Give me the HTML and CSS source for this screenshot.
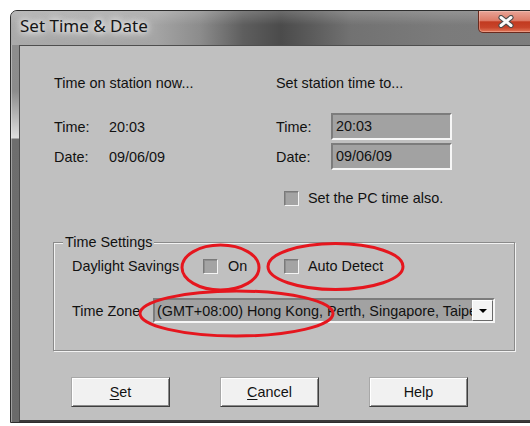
FILE: index.html
```html
<!DOCTYPE html>
<html lang="en">
<head>
<meta charset="utf-8">
<title>Set Time &amp; Date</title>
<link rel="stylesheet" href="styles.css">
</head>
<body>
<div class="window">
  <div class="titlebar">
    <span class="title">Set Time &amp; Date</span>
    <div class="close">
      <svg width="18" height="13" viewBox="0 0 18 13">
        <path d="M4 2.5 L14 10.5 M14 2.5 L4 10.5" stroke="#4a4a4a" stroke-width="5.2" stroke-linecap="round"/>
        <path d="M4 2.5 L14 10.5 M14 2.5 L4 10.5" stroke="#fbfbfb" stroke-width="3" stroke-linecap="round"/>
      </svg>
    </div>
  </div>
  <div class="client">
    <div class="columns">
      <div class="col col-left">
        <p class="heading">Time on station now...</p>
        <div class="row"><span class="label">Time:</span><span class="value">20:03</span></div>
        <div class="row"><span class="label">Date:</span><span class="value">09/06/09</span></div>
      </div>
      <div class="col col-right">
        <p class="heading">Set station time to...</p>
        <div class="row"><span class="label">Time:</span><span class="input">20:03</span></div>
        <div class="row"><span class="label">Date:</span><span class="input">09/06/09</span></div>
        <div class="check pc"><span class="box"></span><span>Set the PC time also.</span></div>
      </div>
    </div>
    <fieldset class="group">
      <legend>Time Settings</legend>
      <div class="grow grow-dst">
        <span class="glabel">Daylight Savings</span>
        <div class="check check-on"><span class="box"></span><span>On</span></div>
        <div class="check"><span class="box"></span><span>Auto Detect</span></div>
      </div>
      <div class="grow grow-zone">
        <span class="glabel glabel-zone">Time Zone</span>
        <div class="select">
          <span class="select-text">(GMT+08:00) Hong Kong, Perth, Singapore, Taipei</span>
          <span class="select-arrow"><span class="tri"></span></span>
        </div>
      </div>
    </fieldset>
    <div class="buttons">
      <button class="btn"><u>S</u>et</button>
      <button class="btn"><u>C</u>ancel</button>
      <button class="btn">Help</button>
    </div>
  </div>
</div>
<svg class="marks" width="530" height="426" viewBox="0 0 530 426">
  <ellipse cx="220.5" cy="267.5" rx="38.5" ry="22.5" fill="none" stroke="#e5161e" stroke-width="3"/>
  <ellipse cx="335.5" cy="266.5" rx="67.5" ry="23" fill="none" stroke="#e5161e" stroke-width="3"/>
  <ellipse cx="236.5" cy="313.5" rx="96.5" ry="22.5" fill="none" stroke="#e5161e" stroke-width="3"/>
</svg>
</body>
</html>
```

FILE: styles.css
```css
html, body {
  margin: 0;
  padding: 0;
}

body {
  width: 530px;
  height: 426px;
  overflow: hidden;
  position: relative;
  background: #fff;
  font-family: "Liberation Sans", Arial, sans-serif;
  font-size: 14.4px;
  color: #111;
}

/* window frame */
.window {
  margin: 10px 0 0 10px;
  width: 540px;
  border: 1px solid #2e2e2e;
  border-radius: 7px 7px 0 0;
  overflow: hidden;
  background: linear-gradient(180deg, #8e8e8e 0, #8c8c8c 80px, #dedede 127px, #6e6e6e 128px, #6a6a6a 100%);
  box-shadow: inset 1px 1px 0 rgba(255, 255, 255, 0.35);
}

.titlebar {
  height: 34px;
  display: flex;
  align-items: flex-start;
  background:
    linear-gradient(180deg, rgba(255, 255, 255, 0.18) 0, rgba(255, 255, 255, 0) 14px),
    linear-gradient(90deg, #aaaaaa 0%, #a4a4a4 27%, #8c8c8c 35%, #5e5e5e 43%, #4b4b4b 50%, #5c5c5c 56%, #727272 63%, #7b7b7b 80%, #7e7e7e 100%);
}

.title {
  flex: 1;
  margin: 5px 0 0 9px;
  font-family: "Noto Sans", "Open Sans", sans-serif;
  font-size: 17px;
  line-height: 20px;
  color: #151515;
  text-shadow: 0 0 6px #fff, 0 0 10px rgba(255, 255, 255, 0.9), 0 0 14px rgba(255, 255, 255, 0.7);
}

.close {
  width: 56px;
  height: 22px;
  margin-right: 17px;
  box-sizing: border-box;
  border: 1px solid #6a2a1e;
  border-top: none;
  border-radius: 0 0 5px 5px;
  display: flex;
  align-items: center;
  justify-content: center;
  background: linear-gradient(180deg, #e8a497 0%, #dd7c68 45%, #c23a20 52%, #c7442a 78%, #e2785a 100%);
  box-shadow: inset 0 0 0 1px rgba(255, 220, 210, 0.35);
}

/* dialog client area */
.client {
  margin: 0 8px 0 8px;
  height: 374px;
  border-top: 1px solid #4e4e4e;
  border-left: 1px solid #4e4e4e;
  border-bottom: 2px solid #3a3a3a;
  background: #c0c0c0;
}

.columns {
  display: flex;
  height: 188px;
  box-sizing: border-box;
  padding: 29px 0 0 34px;
}

.col-left {
  width: 222px;
}

.heading {
  margin: 0 0 22px;
  height: 16px;
  line-height: 16px;
}

.row {
  display: flex;
  align-items: center;
  height: 27px;
  margin-bottom: 3px;
}

.label {
  width: 55px;
}

.input {
  width: 121px;
  height: 27px;
  box-sizing: border-box;
  padding-left: 3px;
  line-height: 23px;
  border: 2px solid;
  border-color: #7c7c7c #f6f6f6 #f6f6f6 #7c7c7c;
  background: #a2a2a2;
}

/* checkboxes */
.check {
  display: flex;
  align-items: center;
}

.box {
  width: 15px;
  height: 15px;
  box-sizing: border-box;
  margin-right: 9px;
  border: 1px solid;
  border-color: #7a7a7a #f4f4f4 #f4f4f4 #7a7a7a;
  background: #a4a4a4;
  box-shadow: inset 1px 1px 0 #8e8e8e;
}

.pc {
  margin: 20px 0 0 8px;
  height: 16px;
}

/* Time Settings group */
.group {
  margin: 0 0 0 33px;
  width: 462px;
  min-width: 0;
  box-sizing: border-box;
  padding: 8px 0 27px 0;
  border: 1px solid #8a8a8a;
  box-shadow: 1px 1px 0 #f2f2f2, inset 1px 1px 0 #f2f2f2;
}

.group legend {
  margin-left: 9px;
  padding: 0 2px;
  line-height: 16px;
  background: #c0c0c0;
}

.grow {
  display: flex;
  align-items: center;
  padding-left: 18px;
}

.grow-dst {
  height: 16px;
}

.grow-zone {
  height: 25px;
  margin-top: 24px;
}

.glabel {
  width: 131px;
}

.glabel-zone {
  width: 81px;
}

.check-on {
  width: 81px;
}

.check-on .box {
  margin-right: 10px;
}

.select {
  width: 342px;
  height: 25px;
  box-sizing: border-box;
  display: flex;
  align-items: center;
  border: 2px solid;
  border-color: #7c7c7c #f6f6f6 #f6f6f6 #7c7c7c;
  background: #a2a2a2;
}

.select-text {
  flex: 1;
  min-width: 0;
  overflow: hidden;
  white-space: nowrap;
  padding-left: 2px;
}

.select-arrow {
  width: 21px;
  height: 21px;
  box-sizing: border-box;
  display: flex;
  align-items: center;
  justify-content: center;
  border: 1px solid;
  border-color: #ffffff #6a6a6a #6a6a6a #ffffff;
  background: #f4f4f4;
}

.tri {
  width: 0;
  height: 0;
  border-left: 4px solid transparent;
  border-right: 4px solid transparent;
  border-top: 4px solid #000;
}

/* command buttons */
.buttons {
  display: flex;
  gap: 50px;
  margin-top: 26px;
  padding-left: 51px;
}

.btn {
  width: 99px;
  height: 30px;
  padding: 0;
  font-family: "Liberation Sans", Arial, sans-serif;
  font-size: 14.4px;
  color: #111;
  background: #f1f1f1;
  border: 1px solid;
  border-color: #a8a8a8 #3e3e3e #3e3e3e #a8a8a8;
  box-shadow: inset 1px 1px 0 #ffffff, inset -1px -1px 0 #8a8a8a;
}

.btn u {
  text-underline-offset: 2px;
}

/* red annotation rings drawn on top of the dialog */
.marks {
  position: absolute;
  left: 0;
  top: 0;
  pointer-events: none;
}
```
